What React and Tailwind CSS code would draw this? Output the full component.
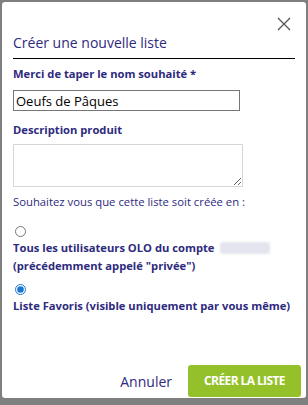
import React, { useState } from 'react';

export default function App() {
    const [choice, setChoice] = useState('favoris');
    const [name, setName] = useState('Oeufs de Pâques');

    return (
        <div className="w-[308px] h-[405px] bg-[#7f7f7f] p-[2px] pb-[7px]" style={{ fontFamily: '"Open Sans", sans-serif' }}>
            <div className="h-full bg-white rounded-[3px] flex flex-col px-[11px] text-[#2e2a7e]">

                {/* ── Header ── */}
                <div className="flex justify-end pt-[15px] pr-[4px]">
                    <svg width="14" height="14" viewBox="0 0 14 14" fill="none" stroke="#555" strokeWidth="1.3">
                        <path d="M1 1L13 13M13 1L1 13" />
                    </svg>
                </div>
                <h2 className="text-[14px] leading-[20px] mt-[2px] pb-[5px] border-b border-black">
                    Créer une nouvelle liste
                </h2>

                {/* ── Name ── */}
                <label className="text-[11.2px] font-bold leading-[16px] mt-[7px]">
                    Merci de taper le nom souhaité *
                </label>
                <input
                    value={name}
                    onChange={e => setName(e.target.value)}
                    className="mt-[8px] w-[227px] h-[21px] border border-[#767676] px-[2px] text-[13px] text-black outline-none"
                />

                {/* ── Description ── */}
                <label className="text-[11.2px] font-bold leading-[16px] mt-[11px]">
                    Description produit
                </label>
                <textarea
                    autoFocus
                    className="mt-[6px] w-[230px] h-[43px] border border-[#d6d6d6] resize-y outline-none px-[2px] text-[13px]"
                />

                <p className="text-[11.3px] leading-[16px] mt-[7px]">
                    Souhaitez vous que cette liste soit créée en :
                </p>

                {/* ── Options ── */}
                <div className="mt-[16px] flex flex-col">
                    <input
                        type="radio"
                        checked={choice === 'tous'}
                        onChange={() => setChoice('tous')}
                        className="w-[11px] h-[11px] m-0 ml-[2px] accent-[#1976d2]"
                    />
                    <p className="text-[11.2px] font-bold leading-[18px] mt-[2px] flex items-center">
                        Tous les utilisateurs OLO du compte
                        <span className="inline-block ml-[6px] w-[50px] h-[12px] bg-[#e4e4ee] rounded-[3px] blur-[1px]" />
                    </p>
                    <p className="text-[11.2px] font-bold leading-[18px]">(précédemment appelé "privée")</p>

                    <input
                        type="radio"
                        checked={choice === 'favoris'}
                        onChange={() => setChoice('favoris')}
                        className="w-[11px] h-[11px] m-0 ml-[2px] mt-[9px] accent-[#1976d2]"
                    />
                    <p className="text-[11.2px] font-bold leading-[18px] mt-[2px] whitespace-nowrap">
                        Liste Favoris (visible uniquement par vous même)
                    </p>
                </div>

                {/* ── Footer ── */}
                <div className="mt-auto flex items-center justify-end gap-[16px] pb-[1px] -mr-[6px]">
                    <button className="text-[14px] text-[#2e2a7e]">Annuler</button>
                    <button className="w-[113px] h-[32px] rounded-[3px] bg-[#94c12a] text-white text-[12px] font-bold tracking-[-0.6px]">
                        CRÉER LA LISTE
                    </button>
                </div>
            </div>
        </div>
    );
}
